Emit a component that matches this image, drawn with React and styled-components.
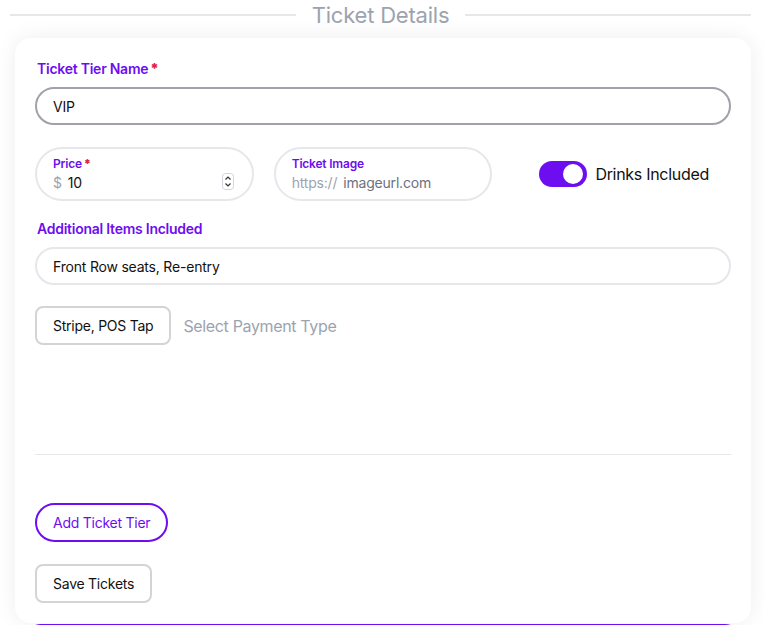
import styled, { createGlobalStyle } from "styled-components";

const purple = "#6d0ef0";
const gray = "#9ca3af";
const line = "#e5e7eb";

const GlobalStyle = createGlobalStyle`
  html, body {
    margin: 0;
    overflow: hidden;
  }
  body {
    background: #ffffff;
    font-family: Inter, "Noto Sans", sans-serif;
    color: #111111;
    letter-spacing: -0.2px;
  }
  * { box-sizing: border-box; }
`;

const Page = styled.div`
  padding: 0 13px 0 15px;
  overflow: hidden;
  height: 625px;
`;

const Header = styled.div`
  display: flex;
  align-items: center;
  gap: 16px;
  height: 30px;
  margin: 0 0 8px -5px;

  span {
    flex: 1;
    height: 2px;
    background: ${line};
  }

  h2 {
    margin: 0;
    font-size: 22px;
    font-weight: 400;
    color: ${gray};
    letter-spacing: -0.2px;
  }
`;

const Card = styled.section`
  background: #fff;
  border-radius: 16px;
  box-shadow: 0 0 22px rgba(0, 0, 0, 0.07);
  padding: 21px 20px 20px;
`;

const Label = styled.div`
  font-size: 14px;
  line-height: 20px;
  font-weight: 600;
  color: ${purple};
  margin: 0 0 8px 2px;
  letter-spacing: -0.25px;

  b {
    color: #e11d48;
    margin-left: 2px;
  }
`;

const TextInput = styled.div`
  height: 38px;
  border-radius: 999px;
  border: 2px solid ${(p) => (p.$focus ? "#a1a1aa" : line)};
  display: flex;
  align-items: center;
  padding: 0 16px;
  font-size: 14px;
`;

const Row = styled.div`
  display: grid;
  grid-template-columns: repeat(3, 1fr);
  gap: 20px;
  margin: 22px 0 18px;
  align-items: center;
`;

const FieldBox = styled.div`
  height: 54px;
  border-radius: 999px;
  border: 2px solid ${line};
  padding: 2px 14px 0 16px;
  display: flex;
  align-items: center;
  justify-content: space-between;

  small {
    display: block;
    font-size: 12px;
    line-height: 16px;
    font-weight: 600;
    color: ${purple};

    b {
      color: #e11d48;
      margin-left: 2px;
    }
  }
`;

const Value = styled.div`
  font-size: 14px;
  line-height: 22px;
  color: #111;

  i {
    font-style: normal;
    color: ${gray};
    margin-right: 6px;
  }

  em {
    font-style: normal;
    color: #6b7280;
  }
`;

const Spinner = styled.svg`
  margin-top: 12px;
  margin-right: 4px;
`;

const ToggleWrap = styled.label`
  display: flex;
  align-items: center;
  justify-content: center;
  gap: 8px;
  padding-left: 5px;
  font-size: 16px;
  color: #111;
  letter-spacing: -0.3px;
`;

const Toggle = styled.span`
  width: 48px;
  height: 26px;
  border-radius: 999px;
  background: ${purple};
  position: relative;

  &::after {
    content: "";
    position: absolute;
    top: 3px;
    right: 4px;
    width: 20px;
    height: 20px;
    border-radius: 50%;
    background: #fff;
  }
`;

const PayRow = styled.div`
  display: flex;
  align-items: center;
  gap: 12px;
  margin-top: 21px;
  height: 39px;
`;

const Button = styled.button`
  font-family: inherit;
  font-size: 14px;
  letter-spacing: -0.25px;
  height: 39px;
  padding: 0 16px;
  background: #fff;
  cursor: pointer;
  border: 2px solid ${(p) => (p.$primary ? purple : "#d4d4d8")};
  color: ${(p) => (p.$primary ? purple : "#111")};
  border-radius: ${(p) => (p.$pill ? "999px" : "8px")};
`;

const Placeholder = styled.span`
  font-size: 16px;
  letter-spacing: -0.35px;
  color: ${gray};
`;

const Divider = styled.hr`
  border: none;
  border-top: 1px solid ${line};
  margin: 109px 0 48px;
`;

const Actions = styled.div`
  display: flex;
  flex-direction: column;
  align-items: flex-start;
  gap: 22px;
`;

const NextCard = styled.div`
  margin: 1px 10px 0;
  height: 20px;
  border-top: 4px solid ${purple};
  border-radius: 16px 16px 0 0;
`;

export default function App() {
  return (
    <>
      <GlobalStyle />
      <Page>
        <Header>
          <span />
          <h2>Ticket Details</h2>
          <span />
        </Header>
        <Card>
          <Label>
            Ticket Tier Name<b>*</b>
          </Label>
          <TextInput $focus>VIP</TextInput>

          <Row>
            <FieldBox>
              <div>
                <small>
                  Price<b>*</b>
                </small>
                <Value>
                  <i>$</i>10
                </Value>
              </div>
              <Spinner width="12" height="17" viewBox="0 0 12 17">
                <rect x="0.5" y="0.5" width="11" height="16" rx="3" fill="#fff" stroke="#d1d5db" />
                <path d="M3.5 6.5 6 4l2.5 2.5M3.5 10.5 6 13l2.5-2.5" fill="none" stroke="#333" strokeWidth="1.2" />
              </Spinner>
            </FieldBox>
            <FieldBox>
              <div>
                <small>Ticket Image</small>
                <Value>
                  <i>https://</i>
                  <em>imageurl.com</em>
                </Value>
              </div>
            </FieldBox>
            <ToggleWrap>
              <Toggle />
              Drinks Included
            </ToggleWrap>
          </Row>

          <Label>Additional Items Included</Label>
          <TextInput>Front Row seats, Re-entry</TextInput>

          <PayRow>
            <Button>Stripe, POS Tap</Button>
            <Placeholder>Select Payment Type</Placeholder>
          </PayRow>

          <Divider />

          <Actions>
            <Button $primary $pill>
              Add Ticket Tier
            </Button>
            <Button>Save Tickets</Button>
          </Actions>
        </Card>
        <NextCard />
      </Page>
    </>
  );
}
